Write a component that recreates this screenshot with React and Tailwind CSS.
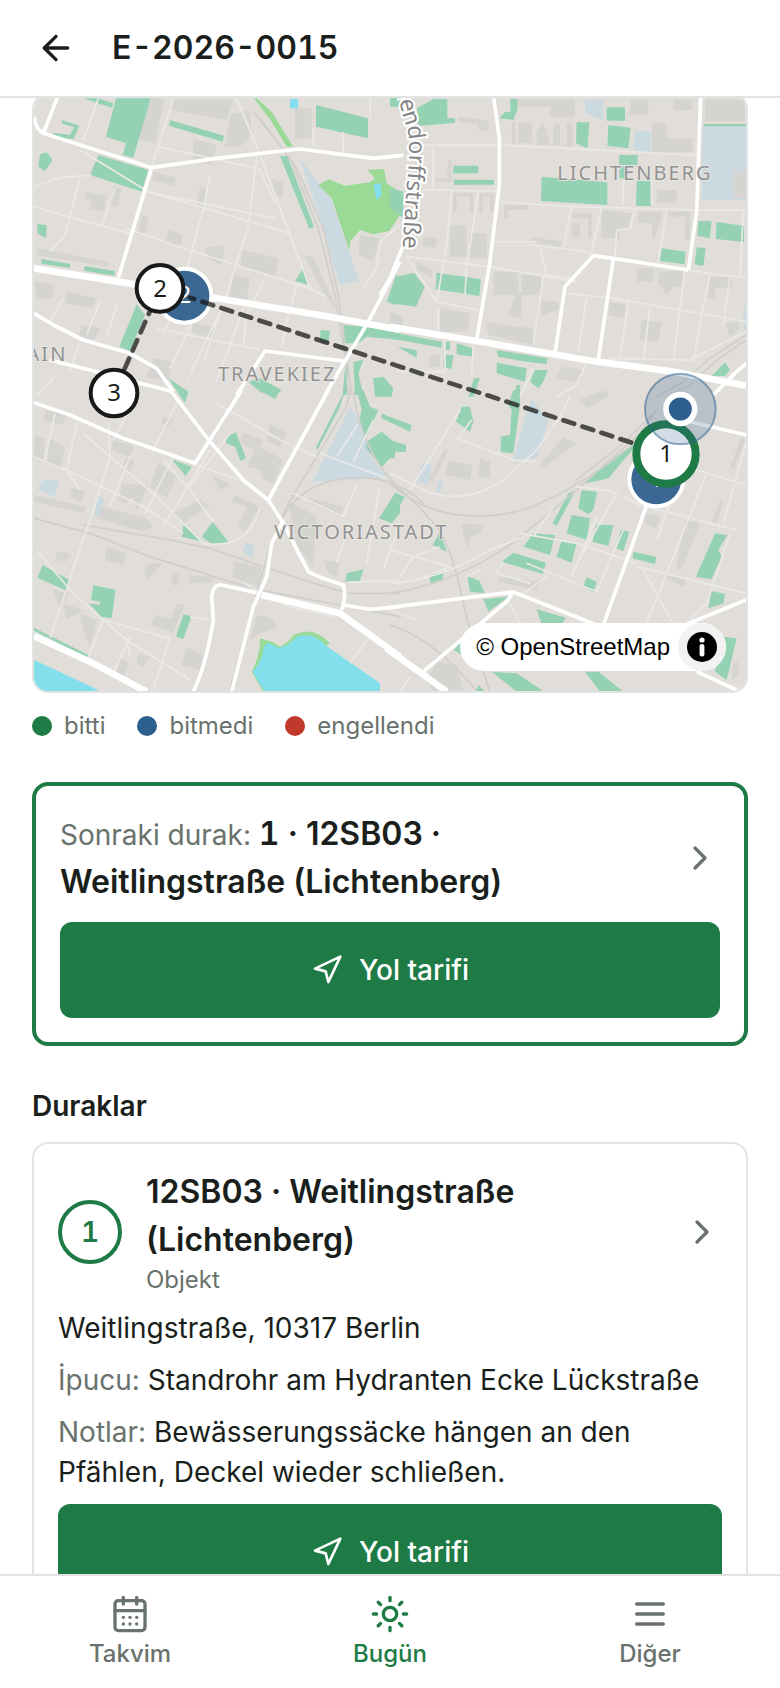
import { ArrowLeft, CalendarDays, ChevronRight, Navigation, Sun } from 'lucide-react';

// map geometry, one entry per tile; x / y shift the tile on the canvas
const tiles = [
  {
    x: 0,
    y: 0,
    buildings: [
      'M345 10H405L375 145L330 135Z',
      'M430 12H610L590 75L425 45Z',
      'M490 130L560 150L545 210L488 195Z',
      'M600 60L660 45L665 120L630 155L585 155Z',
      'M795 40H845V130H795Z',
      'M370 230L438 248L430 272L365 255Z',
      'M165 290L230 300L222 350L180 340L185 315L163 310Z',
      'M250 275L275 280L262 335L240 330Z',
      'M510 275L530 278L518 345L498 335Z',
      'M335 360L355 365L345 420L325 415Z',
      'M415 405L458 420L450 455L405 440Z',
      'M525 460L585 450L575 510L535 490Z',
      'M640 465L745 490L735 545L630 515Z',
      'M610 540L660 550L650 620L598 610Z',
      'M725 250L762 265L755 310L735 300Z',
      'M820 480L850 485L920 640L890 610Z',
      'M12 560L75 570L65 610L20 610Z',
      'M110 590L200 610L185 640L105 625Z',
      'M20 460L240 500L235 515L20 480Z',
      'M155 690L210 700L195 735L145 725Z',
      'M370 790L425 800L415 860L350 845Z',
      'M490 680L560 700L550 730L485 710Z',
      'M990 420L1050 430L1030 500L985 480Z',
    ],
    parks: [
      'M258 10H362L310 188L278 180L288 145L228 125Z',
      'M205 180L355 225L335 290L180 240Z',
      'M420 75L582 122L578 140L417 92Z',
      'M95 75L148 92L130 133L70 125V113L120 120L132 97L97 86Z',
      'M160 10H205L250 25L245 38Z',
      'M858 30L1014 70V130L858 95Z',
      'M30 178L50 172L68 195L45 228L25 215Z',
      'M22 388L50 390L48 430L22 415Z',
      'M34 492L120 507V519L34 506Z',
      'M164 513L254 528V542L162 527Z',
      'M750 183H772L852 395L838 402Z',
      'M820 520L838 570L795 558Z',
      'M320 628L345 660L300 768L268 755Z',
      'M872 705L900 708L895 745L870 740Z',
      'M940 690L1110 705V735L1010 725L985 745L940 745Z',
      'M1100 535V630L1070 620Z',
      'M655 860L690 850L755 885L735 905L690 890Z',
      'M415 850L475 890L465 925Z',
      'M970 800L1000 795L985 835L1000 900H975Z',
      'M1030 850L1060 845L1090 880L1085 905H1035Z',
      'M945 820L955 815L950 900H938Z',
      'M1080 10H1110V35H1080Z',
    ],
    meadows: [
      'M680 10L725 50L790 155L770 155L725 80L672 10Z',
      'M865 270L895 253L945 272L1020 262L1035 250L1012 225L1062 222L1070 265L1110 290V360L1078 408L1030 418L990 405L960 440L958 468L940 415L905 310Z',
    ],
    pale: ['M810 190L850 245L900 305L987 558L928 568L880 400Z'],
    water: ['M1030 268L1052 265L1055 300L1040 315Z', 'M780 12H804V40H780Z'],
    minor: [
      'M205 10L160 135',
      'M430 10L385 155L365 215',
      'M385 155L690 222L735 325',
      'M150 165L355 290L780 415',
      'M12 275L90 248L185 240',
      'M12 335L130 370L300 415',
      'M150 250L105 420L60 470',
      'M255 280L215 390',
      'M540 240L520 340L450 600L400 720',
      'M680 190L655 390L590 600L520 800',
      'M290 400L460 460L840 580L890 605',
      'M620 10L690 180L840 580',
      'M850 100V155M1020 10V70M940 110V175',
      'M350 290L735 370',
      'M380 700L690 765',
      'M575 640L470 860M515 620L420 820M640 640L560 860',
      'M100 610L60 680M210 620L170 720M260 630L230 730',
      'M70 850L20 900M150 740L120 830',
      'M700 560L650 660L640 750M800 570L770 680L755 760',
      'M1110 390L1050 440L1040 520L1000 580',
    ],
    rails: ['M690 70L800 220L880 400L925 600L950 780L965 900', 'M670 50L780 190L865 400L915 600L945 780L955 900'],
    major: [
      'M85 0L40 115Q15 100 12 65M40 115L365 218',
      'M365 218L560 190L810 162L1030 190L1110 182',
      'M365 218L265 548',
      'M12 655L70 690L160 735L300 775L380 820L430 890',
      'M60 795L200 830L330 865L430 890',
      'M620 900L705 768L940 798',
      'M1110 500L1015 680L885 900',
    ],
    trunk: ['M12 520L265 560L560 610L900 665L1110 705'],
  },
  {
    x: 1080,
    y: 0,
    buildings: [
      'M380 12H555V65H480V35H380Z',
      'M205 65L290 75L300 105L270 110L260 85L205 80Z',
      'M365 80H375V145H365ZM385 82H425V145H385ZM440 110L460 80L480 150H440ZM490 85H510V150H490ZM530 85H548V155H530Z',
      'M785 85H830V130H908V172H785Z',
      'M720 15H775V60H720ZM850 15H908V45H850ZM945 15H1065V80H945Z',
      'M175 195H185V260H135V250H170Z',
      'M190 295H250V350H240V305H200V355H190Z',
      'M268 295H310V355H300V305H278V355H268Z',
      'M190 390H230V485H180V395ZM245 415H290V490H238V420Z',
      'M342 330H415V345H355V370H342Z',
      'M425 425L515 440L512 455L420 440Z',
      'M545 355H605V430H595V370H545ZM545 385H570V425H545Z',
      'M640 345L725 355L715 405H690V430H635V350Z',
      'M745 350H820L790 440L785 385H745Z',
      'M835 350H900V435H885V365H835Z',
      'M800 285H860V325H800ZM1030 230H1068V310H1030Z',
      'M310 530H385V600H310ZM395 540H455V600H395Z',
      'M380 590L395 595V670L355 660ZM290 680L335 690L430 700V750L295 720Z',
      'M455 615L505 620V645L455 660Z',
      'M740 520H790V560H740ZM805 530L880 525L875 575H850L830 600L805 565Z',
      'M955 545H1025V580H975V610H955Z',
      'M660 620L710 630L700 670L655 660ZM755 675L815 680L805 740L750 735Z',
      'M1005 685L1045 680L1050 700L1020 725Z',
      'M150 640L240 655L235 710H150Z',
      'M0 650L40 665L38 690L0 685Z',
      'M100 425L145 430L135 460L98 450Z',
      'M80 500L130 525L125 545L75 525Z',
      'M515 815L580 825L555 860L500 850Z',
      'M120 780H150V815H115Z',
    ],
    parks: [
      'M80 40L130 12H172V70H195V83L85 93Z',
      'M360 12H382V45L370 75L328 70L345 50H362Z',
      'M0 10L25 10L15 35L0 30Z',
      'M650 37H705V77H650Z',
      'M560 82H598L592 160L558 145Z',
      'M655 90L722 98L715 160L652 152Z',
      'M190 212H265V235H190ZM192 254H312V269H192Z',
      'M688 180H743V210H688ZM688 215H705V250H688Z',
      'M455 245L652 262V330L453 318Z',
      'M740 258H782V333H738Z',
      'M925 378H965L960 430L922 422Z',
      'M980 380L1062 393V441L977 432Z',
      'M815 460L887 470L883 508L810 498Z',
      'M920 457L947 460L940 513L914 508Z',
      'M0 595L20 545L72 533L104 575L78 635L0 625Z',
      'M140 533L273 553L268 603L137 583Z',
      'M0 710L155 740V758L0 730Z',
      'M22 755L80 765V788Z',
      'M200 745L248 760V785L200 778ZM162 780H190L185 823L160 815ZM167 740H180V765H167Z',
      'M320 765L473 790L470 808L390 797L325 785Z',
      'M320 803L410 820L405 860L320 835ZM435 825H473L460 860L445 880L420 860Z',
      'M1005 802L1020 825L1005 843H965Z',
      'M0 280L40 290V370L0 340Z',
      'M252 850H270L250 905H235ZM380 870H392L385 905H372Z',
      'M940 87H1068V94H940Z',
    ],
    meadows: ['M0 285L15 290V360L0 375Z'],
    pale: ['M585 15H640V75L585 55Z', 'M735 108H782V172L728 165Z', 'M938 94H1068V315H935Z', 'M1060 640L1068 630V715H1060Z'],
    water: [],
    minor: [
      'M50 155L135 150H330L900 180L925 175',
      'M100 285L325 288M330 320L550 335L930 345L1068 345',
      'M185 290L170 450L140 620',
      'M265 290L245 420L225 540',
      'M50 485L300 515L490 548L560 560',
      'M50 485L140 620L265 645',
      'M415 450L560 465L620 480M450 460L470 540L540 548',
      'M545 335L520 460M635 340L605 470M830 345L805 500M735 340L720 400L680 405L675 485',
      'M690 495L895 525L1068 550',
      'M530 595L670 610L870 645L1068 680',
      'M885 525L870 645L850 795M960 540L935 660L910 800M1020 540L1000 690M590 600L565 770M460 545L430 745',
      'M715 620L690 790M780 635L760 790',
      'M310 440L440 440M130 155V280M700 255V330M785 255V330',
      'M655 790L900 795L1068 710',
      'M165 735V830L20 830M250 745L245 840M430 820L390 905M590 800L560 870L500 905',
      'M1060 350L1050 545M145 640V720M230 510L225 600',
    ],
    rails: ['M1068 720L960 790L880 860L800 905', 'M1068 735L975 800L900 870L830 905'],
    major: [
      'M310 0L328 130V270L300 500L260 735',
      'M932 0L920 350L895 525',
      'M895 525L670 490L610 482L525 575L495 775',
      'M670 490L625 795',
      'M-10 187L40 180',
      'M40 450L0 550L-30 600',
      'M1068 805L1040 830L970 900',
    ],
    trunk: ['M0 695L300 745L620 800L850 830L1068 872'],
  },
  {
    x: 0,
    y: 885,
    buildings: [
      'M50 60L110 75L100 105L40 90Z',
      'M15 135L45 145L40 210L12 205ZM60 145L105 175L90 235L50 220Z',
      'M250 150L310 170L300 200L245 180Z',
      'M290 200L315 215L300 250L275 240Z',
      'M275 280L355 285L320 365L310 320L285 340L265 330Z',
      'M385 215L440 260L410 325L360 290Z',
      'M430 370L510 330L540 345L460 400Z',
      'M125 295L165 300L155 335L120 325Z',
      'M215 350L350 385L370 410L340 425L200 385Z',
      'M12 315L165 350V370L12 335Z',
      'M80 485L120 490L110 515L78 510ZM230 470L290 490L280 525L225 510Z',
      'M360 520L400 520L350 570L345 535L325 550ZM430 550L450 555L440 590L423 580Z',
      'M475 555L550 560L545 580L480 580Z',
      'M615 515L695 530L685 590L605 560Z',
      'M440 640L465 645L430 730L365 705L375 675L425 685Z',
      'M680 675Q740 680 740 715L690 730L660 750Z',
      'M540 250L600 285L570 300ZM615 315L690 350L645 425L625 410L650 350L605 335Z',
      'M680 165L760 210L730 280L700 270L690 240L650 230Z',
      'M830 320L940 350L930 380L840 340ZM770 330L860 380L850 530L800 470L790 400Z',
      'M880 510L930 520L920 560L895 550Z',
      'M640 130L700 150L680 180L630 160ZM720 100L770 130L750 170L710 150Z',
      'M100 640L160 660L110 690ZM150 670L200 690L180 770L165 740ZM70 600L115 610L90 660Z',
      'M470 770L530 800L510 840L455 825ZM325 790L360 800L340 830L320 820ZM270 805L300 820L280 860L260 850Z',
      'M400 80L430 90L415 110L395 100Z',
    ],
    parks: [
      'M590 140L618 127L648 205L632 213L615 170L588 160Z',
      'M425 208L485 230L467 258Z',
      'M548 395L597 458L545 462L515 440Z',
      'M460 405L520 455L455 440Z',
      'M38 525L118 570L110 602L22 563Z',
      'M190 585L257 600L245 685L215 680L175 640L210 645V635L183 630Z',
      'M460 673L485 678L460 747L438 740Z',
      'M12 713L175 795V805L12 722Z',
      'M945 0L930 50L862 180L858 172L935 20Z',
      'M980 0H1000L1020 50L1045 60L1010 140L985 100L995 60Z',
      'M1010 155L1055 125L1110 170L1055 232L1008 175Z',
      'M1055 70L1110 95V110L1055 85Z',
      'M1095 310L1110 315V370L1085 400L1047 385Z',
      'M950 550L1000 538L990 572L945 575Z',
      'M690 0H750L735 28Z',
    ],
    meadows: ['M690 745L725 755L750 770Q780 755 790 735Q850 705 900 760L885 770L700 905L665 845Q690 800 690 745Z'],
    pale: [
      'M960 50L1000 110L1020 200L1075 265L850 275L830 310Z',
      'M40 270H88L75 320L20 298Z',
      'M205 320L222 325L210 380L192 375Z',
      'M650 455L675 470L665 505L638 485Z',
    ],
    water: ['M712 758L745 773Q775 770 800 740Q850 725 885 765L1050 880V1000H760L668 845Q700 810 700 775Z', 'M12 810L185 890L250 930V1000H12Z'],
    minor: [
      'M75 70L45 210M140 100L110 240L150 300',
      'M235 100L240 200L200 330L60 745',
      'M12 200L130 250L340 350L460 430',
      'M160 130L240 200L370 310L520 460Q660 480 690 350',
      'M300 200L240 350M430 200L345 370M540 180L400 410',
      'M330 0L250 150M440 40L370 180',
      'M560 40L750 150L860 200',
      'M400 210L480 300L550 395M500 225L630 270L715 330',
      'M20 480L120 600L220 690L290 750L300 800',
      'M220 690L420 745M420 745L370 900M220 690L175 800M300 740L250 850',
      'M290 750L480 870M480 680L540 690',
      'M640 580L780 650L910 680M1050 290L1010 520M980 285L940 380L790 310',
      'M960 400L920 520M1110 400L1060 540M950 578L1110 570',
      'M985 100L920 200M1030 90L970 215M870 190L1070 265',
      'M1020 740L960 820M600 130L480 290',
    ],
    rails: [
      'M12 385L180 430L360 500L600 575L690 600L1110 680',
      'M160 405L420 450L540 475L700 530L850 580L960 610L1110 610',
      'M960 0L950 50L860 200L770 350L720 470L680 610L600 900',
      'M755 390Q820 260 1000 262Q1110 270 1180 340',
      'M970 0Q990 180 1110 300',
    ],
    major: [
      'M12 38L120 75L280 145L495 220L635 0',
      'M420 0L540 155L640 270L715 330L760 400L835 545Q860 560 940 585Q950 620 935 660',
      'M895 0L715 330',
      'M760 390L725 460L710 560L670 650L605 905',
      'M490 905Q530 820 550 690L545 620Q550 580 575 585L680 608',
      'M940 645L1020 658L1110 650',
    ],
    trunk: ['M12 738L180 815L350 905', 'M695 615L930 670L1110 800'],
  },
  {
    x: 1080,
    y: 885,
    buildings: [
      'M175 210L248 225L240 270L165 255ZM270 205L300 215V265L265 260Z',
      'M165 175L175 180L130 275L115 270Z',
      'M565 30L650 0L655 20L590 55Z',
      'M520 140L560 160L460 235L450 225Z',
      'M215 400L280 405L270 430L240 440L235 475L220 440Z',
      'M770 370L810 380L800 415L765 400Z',
      'M885 390L930 400L890 500L870 545L860 530Z',
      'M140 815L200 825L220 905H130L110 870Z',
      'M820 545L890 570L880 590L820 560ZM325 560L450 575L440 600L325 575Z',
      'M1055 140L1065 150L1030 240L1020 230ZM990 330L1000 335L980 400L965 395Z',
      'M1030 820L1045 815V860L1025 870Z',
    ],
    parks: [
      'M215 50H240L250 95L240 125L198 95Z',
      'M370 0H390V45L370 190L332 185V140L360 135L365 60L355 45Z',
      'M0 80L65 105L60 125L0 95ZM0 150L48 165V185H15V205H0Z',
      'M725 165L735 170L655 265Q620 275 583 280L640 225Z',
      'M575 300L622 305L610 360L595 372L565 355Z',
      'M535 310L556 302L500 407L488 400Z',
      'M545 375L600 385L590 450L530 430Z',
      'M618 405L670 405L655 468L608 455Z',
      'M692 420L718 425L700 483L678 475Z',
      'M430 430L495 435L480 495L400 470Z',
      'M515 453L560 458L545 518L500 500Z',
      'M370 488L468 518L458 552L335 515Z',
      'M730 485L798 500L795 523L728 505Z',
      'M975 430L1012 435L985 480L995 500L965 568L918 560Z',
      'M117 555L160 545L158 568L122 580Z',
      'M232 558L268 572L285 610L240 605ZM280 628L355 620L295 665Z',
      'M440 658L528 683L515 702H455Z',
      'M590 562L620 575L610 607L580 590Z',
      'M965 603L1005 612L1000 640L955 655Z',
      'M1000 740L1040 745L1010 870L975 845Z',
      'M150 425L170 485L128 465Z',
      'M15 310L45 320L0 400V335Z',
      'M305 845L380 850L462 905H380ZM585 845H625L700 905H630ZM205 765L240 720L215 795L192 780Z',
      'M265 885L285 905H258Z',
    ],
    meadows: [],
    pale: ['M425 25L475 90L440 205L370 210L400 100Z', 'M100 215L125 225L115 285L78 272ZM145 270L160 275L150 310L138 305Z'],
    water: [],
    minor: [
      'M0 250L100 300Q220 350 340 270L440 180L510 80L540 20',
      'M200 145L370 210L440 215M245 90L200 150',
      'M560 290L650 300L680 310L550 540M620 380L545 560',
      'M390 430L560 460L740 520M490 350L430 440',
      'M410 520L620 605L700 420M340 515L320 550L420 580',
      'M770 350L1040 420M950 250L770 700M740 530L1068 610',
      'M870 250L800 450M1020 430L950 640L890 700M890 230L1068 285M1068 160L1000 400',
      'M360 640L390 700M150 470L70 500L30 560',
      'M0 580Q150 570 300 480L400 440',
      'M0 480L180 530L100 560M270 540L230 560',
      'M860 720L760 540M470 560L400 610M700 320L760 350',
      'M60 860L30 905M0 660L80 690M210 60L60 300',
    ],
    rails: [
      'M0 270Q80 340 140 410Q190 480 220 640L250 760L300 905',
      'M0 280Q150 420 400 360Q560 300 720 170L800 60',
      'M0 610Q200 580 380 450L560 300L760 120',
      'M560 270L700 160L790 70',
      'M0 705Q140 750 260 905',
    ],
    major: [
      'M0 652L370 606L620 705',
      'M370 606L350 635L100 845',
      'M770 345L640 705',
      'M900 95L1068 135',
      'M860 715L1068 630',
      'M920 845L1040 900',
    ],
    trunk: ['M-10 775L170 905'],
  },
];

const layers = [
  { key: 'pale', fill: '#cbdae1' },
  { key: 'buildings', fill: '#d6d4d1' },
  { key: 'meadows', fill: '#9bd996' },
  { key: 'parks', fill: '#95d1b3' },
  { key: 'water', fill: '#82dfeb' },
  { key: 'rails', stroke: '#d0cecb', width: 5 },
  { key: 'minor', stroke: '#ebe9e7', width: 5 },
  { key: 'major', stroke: '#ffffff', width: 11 },
  { key: 'trunk', stroke: '#ffffff', width: 20 },
];

const legend = [
  { label: 'bitti', dot: 'bg-[#1e7b45]' },
  { label: 'bitmedi', dot: 'bg-[#2c5f8d]' },
  { label: 'engellendi', dot: 'bg-[#c0392b]' },
];

const MenuIcon = ({ className }) => (
  <svg viewBox="0 0 24 24" fill="none" stroke="currentColor" strokeWidth="2" strokeLinecap="round" className={className} aria-hidden="true">
    <path d="M4 6h16M4 12h16M4 18h16" />
  </svg>
);

const navItems = [
  { label: 'Takvim', icon: CalendarDays },
  { label: 'Bugün', icon: Sun, active: true },
  { label: 'Diğer', icon: MenuIcon },
];

const TileLayer = ({ layer }) =>
  tiles.map((tile) => (
    <path
      key={`${tile.x}-${tile.y}`}
      transform={`translate(${tile.x} ${tile.y})`}
      d={tile[layer.key].join('')}
      fill={layer.fill || 'none'}
      stroke={layer.stroke || 'none'}
      strokeWidth={layer.width}
      strokeLinejoin="round"
    />
  ));

const Marker = ({ x, y, label, color, width = 12, r = 70 }) => (
  <g>
    <circle cx={x} cy={y} r={r} fill="#ffffff" stroke={color} strokeWidth={width} />
    <text x={x} y={y + 25} textAnchor="middle" fontSize="72" fill="#1a1f1c">
      {label}
    </text>
  </g>
);

const RouteMap = () => (
  <svg
    viewBox="12 0 2136 1788"
    preserveAspectRatio="xMidYMid slice"
    className="block size-full font-['Noto_Sans',sans-serif]"
    role="img"
    aria-label="Harita"
  >
    <rect width="2160" height="1800" fill="#e1deda" />
    {layers.map((layer) => (
      <TileLayer key={layer.key} layer={layer} />
    ))}

    {/* District labels */}
    <g fontSize="60" fill="#929292" letterSpacing="6" stroke="#e9e7e4" strokeWidth="5" paintOrder="stroke">
      <text x="1582" y="254">LICHTENBERG</text>
      <text x="564" y="858">TRAVEKIEZ</text>
      <text x="732" y="1333">VICTORIASTADT</text>
      <text x="112" y="797" textAnchor="end">FRIEDRICHSHAIN</text>
    </g>
    <path id="street" d="M1085 -260L1102 -20Q1112 50 1132 100Q1142 150 1134 230L1126 330L1118 460" fill="none" />
    <text fontSize="69" fill="#858585" stroke="#ffffff" strokeWidth="12" paintOrder="stroke">
      <textPath href="#street" startOffset="100%" textAnchor="end">Möllendorffstraße</textPath>
    </text>
    <text x="153" y="1832" fontSize="62" fill="#4a4a4a">Osthafen</text>

    {/* Planned stops */}
    {[{ x: 463, y: 602, n: 2 }, { x: 1879, y: 1153, n: 1 }].map((p) => (
      <g key={p.n}>
        <circle cx={p.x} cy={p.y} r="81" fill="#3b6892" stroke="#ffffff" strokeWidth="12" />
        <text x={p.x} y={p.y + 22} textAnchor="middle" fontSize="72" fill="#ffffff">
          {p.n}
        </text>
      </g>
    ))}

    {/* Route */}
    <path
      d="M1908 1077L480 608M390 580L252 894"
      fill="none"
      stroke="#1a1a1a"
      strokeOpacity="0.75"
      strokeWidth="14"
      strokeDasharray="34 26"
      strokeDashoffset="10"
      strokeLinecap="round"
    />

    <Marker x={252} y={894} label="3" color="#171a19" />
    <Marker x={390} y={580} label="2" color="#171a19" />
    <Marker x={1908} y={1077} label="1" color="#1e7b45" width={24} r={89} />

    {/* Own position */}
    <circle cx="1951" cy="942" r="106" fill="#2c5f8d" fillOpacity="0.22" stroke="#2c5f8d" strokeOpacity="0.5" strokeWidth="6" />
    <circle cx="1951" cy="942" r="43" fill="#2c5f8d" stroke="#ffffff" strokeWidth="17" />
  </svg>
);

const DirectionsButton = () => (
  <button
    type="button"
    className="flex h-24 w-full items-center justify-center gap-4 rounded-xl bg-[#1e7b45] text-[28px] leading-10 font-medium text-white"
  >
    <Navigation className="size-8" />
    Yol tarifi
  </button>
);

export default function App() {
  return (
    <div className="flex h-screen flex-col bg-white font-[Inter,sans-serif] text-[#1a1f1c]">
      <header className="flex h-[98px] shrink-0 items-center gap-9 border-b-2 border-[#e1e4e2] px-9">
        <button type="button" aria-label="Geri">
          <ArrowLeft className="size-10" />
        </button>
        <h1 className="text-[32px] leading-10 font-semibold tabular-nums">E-2026-0015</h1>
      </header>

      <main className="min-h-0 flex-1 overflow-y-auto px-8 [scrollbar-width:none]">
        <div className="relative -mt-[5px] h-[600px] overflow-hidden rounded-2xl border-2 border-[#e1e4e2]">
          <RouteMap />
          <div className="absolute right-5 bottom-5 flex h-12 items-center gap-2 rounded-full bg-white pl-4">
            <a href="#osm" className="font-['Liberation_Sans',sans-serif] text-2xl text-black">
              © OpenStreetMap
            </a>
            <button type="button" aria-label="Harita bilgisi" className="flex size-12 items-center justify-center rounded-full bg-[#f2f2f2]">
              <svg viewBox="0 0 30 30" className="size-[30px]" aria-hidden="true">
                <circle cx="15" cy="15" r="15" fill="#000" />
                <circle cx="15" cy="8" r="2.6" fill="#fff" />
                <rect x="12.6" y="12" width="4.8" height="12.5" rx="2.2" fill="#fff" />
              </svg>
            </button>
          </div>
        </div>

        <ul className="mt-[15px] flex gap-8 text-2xl leading-9 text-[#69726d]">
          {legend.map((item) => (
            <li key={item.label} className="flex items-center gap-3">
              <span className={`size-5 rounded-full ${item.dot}`} />
              {item.label}
            </li>
          ))}
        </ul>

        {/* Next stop */}
        <section className="mt-[38px] flex flex-col gap-4 rounded-2xl border-4 border-[#1e7b45] p-6">
          <a href="#stop-1" className="flex items-center justify-between gap-6">
            <p className="max-w-[500px] text-[32px] leading-[48px] font-semibold">
              <span className="text-[28px] leading-10 font-normal text-[#69726d]">Sonraki durak: </span>
              <span className="tabular-nums">1</span> · 12SB03 · Weitlingstraße (Lichtenberg)
            </p>
            <ChevronRight className="size-10 shrink-0 text-[#69726d]" />
          </a>
          <DirectionsButton />
        </section>

        <h2 className="mt-10 text-[28px] leading-10 font-semibold">Duraklar</h2>

        <article id="stop-1" className="mt-4 flex flex-col gap-3 rounded-2xl border-2 border-[#e1e4e2] p-6 text-[28px] leading-10">
          <a href="#stop-1" className="flex items-center gap-6">
            <span className="flex size-16 shrink-0 items-center justify-center rounded-full border-4 border-[#1e7b45] font-semibold text-[#1e7b45] tabular-nums">
              1
            </span>
            <div className="flex-1">
              <h3 className="max-w-[440px] text-[32px] leading-[48px] font-semibold">12SB03 · Weitlingstraße (Lichtenberg)</h3>
              <p className="text-2xl leading-8 text-[#69726d]">Objekt</p>
            </div>
            <ChevronRight className="size-10 shrink-0 text-[#69726d]" />
          </a>
          <p>Weitlingstraße, 10317 Berlin</p>
          <p>
            <span className="text-[#69726d]">İpucu:</span> Standrohr am Hydranten Ecke Lückstraße
          </p>
          <p>
            <span className="text-[#69726d]">Notlar:</span> Bewässerungssäcke hängen an den Pfählen, Deckel wieder schließen.
          </p>
          <DirectionsButton />
        </article>
      </main>

      <nav className="grid h-[114px] shrink-0 grid-cols-3 border-t-2 border-[#e1e4e2]">
        {navItems.map(({ label, icon: Icon, active }) => (
          <a
            key={label}
            href="#nav"
            className={`flex flex-col items-center justify-center gap-1 text-2xl leading-8 font-medium ${active ? 'text-[#1e7b45]' : 'text-[#69726d]'}`}
          >
            <Icon className="size-10" />
            {label}
          </a>
        ))}
      </nav>
    </div>
  );
}
